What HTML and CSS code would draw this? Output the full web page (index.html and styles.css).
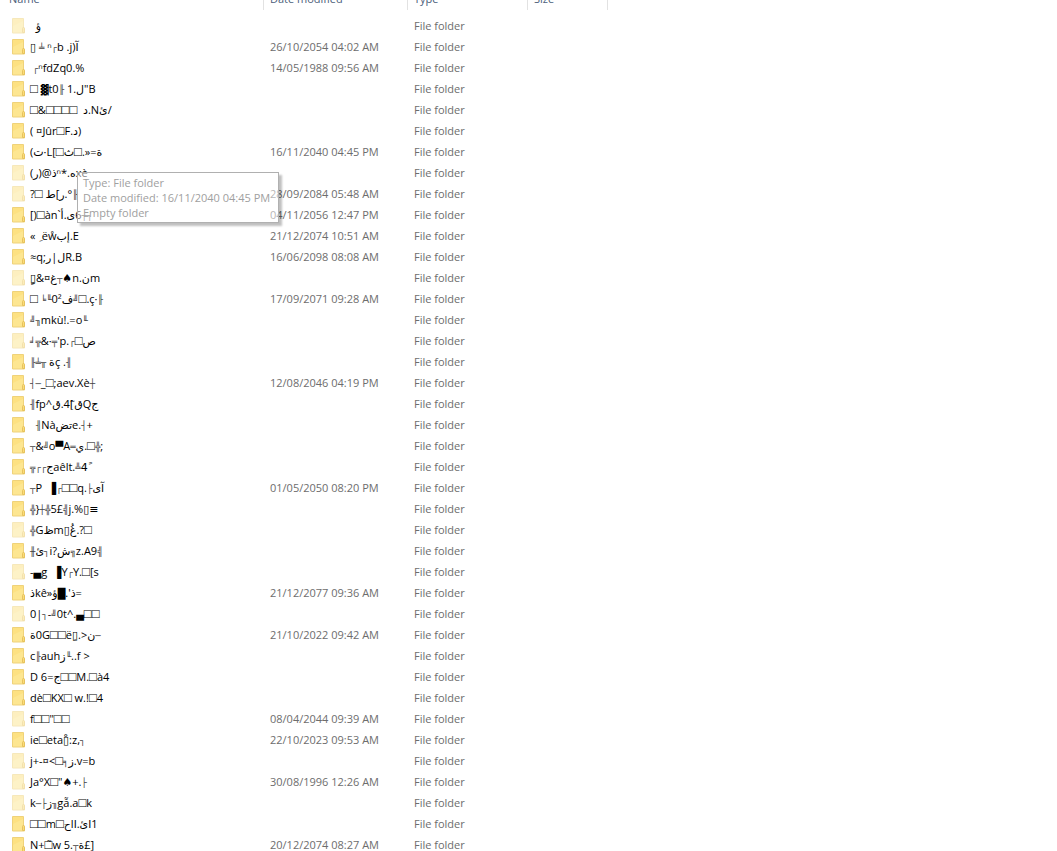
FILE: index.html
```html
<!DOCTYPE html>
<html lang="en">

<head>
  <meta charset="UTF-8">
  <meta name="viewport" content="width=device-width, initial-scale=1.0">
  <title>File folders</title>
  <link rel="stylesheet" href="styles.css">
</head>

<body>
  <main class="explorer">
    <table class="files">
      <thead>
        <tr>
          <th class="col-name">Name</th>
          <th class="col-date">Date modified</th>
          <th class="col-type">Type</th>
          <th class="col-size">Size</th>
          <th class="col-rest"></th>
        </tr>
      </thead>
      <tbody id="rows"></tbody>
    </table>
    <div class="tooltip" role="tooltip">
      <div>Type: File folder</div>
      <div>Date modified: 16/11/2040 04:45 PM</div>
      <div>Empty folder</div>
    </div>
  </main>

  <template id="row">
    <tr>
      <td>
        <span class="entry">
          <svg class="folder" width="14" height="17" viewBox="0 0 14 17" aria-hidden="true">
            <path d="M.5 1.500h11v9l1 1v4.500H.5z" fill="#fde691" stroke="#efd27a" />
            <path d="M1 9l10-5v-2H1z" fill="#fde182" />
            <path d="M10.500 15.500v-4l1-1.500 1 1.500v4z" fill="#fbdc78" stroke="#e6c25e" />
          </svg>
          <span class="name"></span>
        </span>
      </td>
      <td class="date"></td>
      <td>File folder</td>
      <td></td>
      <td></td>
    </tr>
  </template>

  <script>
    // name, date, hidden
    const folders = [
      ['\u00a0 ؤ', '', true],
      ['▯ ╧ ⁿ┌b .j)آ', '26/10/2054 04:02 AM'],
      ['\u00a0┌ⁿfdZq0.%', '14/05/1988 09:56 AM'],
      ['□ ▓t0╟ 1.ل"B', ''],
      ['□&□□□□ \u00a0د.Nئ/', ''],
      ['( ¤Jûr□F.د)', ''],
      ['(ت·L[□ث□.»=ة', '16/11/2040 04:45 PM'],
      ['(ر)@ذⁿ*.ەxè', '', true],
      ['?□ ط[ر.°╟', '28/09/2084 05:48 AM', true],
      ['[)□àn`أ.ى6┬┐', '04/11/2056 12:47 PM'],
      ['« \u00a0ِëẘبإ.E', '21/12/2074 10:51 AM'],
      ['≈q;ر|لR.B', '16/06/2098 08:08 AM'],
      ['▯ٍ&¤غ┬♠n.نm', '', true],
      ['□ ╘╙0²ف╝□.ç·╟', '17/09/2071 09:28 AM'],
      ['╝╖mkù!.=o╙', ''],
      ['╛╦&·╤\'p.┌□ص', '', true],
      ['╟╧╥ ةç .╢', ''],
      ['┤─_□;aev.Xè┼', '12/08/2046 04:19 PM'],
      ['╢fp^ق.4[ٓقQج', ''],
      ['\u00a0 ╢Nàضتe.┤+', ''],
      ['┬&╝o▀A═ي.□╬;', ''],
      ['╦┌┌جaêlt.╩4ً', ''],
      ['┬P \u00a0▐┌□□q.├ىآ', '01/05/2050 08:20 PM'],
      ['╬}┼╬5£╣j.%▯≡', ''],
      ['╬Gظm▯غُ.?□', '', true],
      ['╫ئ┐i?ش╗z.A9╣', ''],
      ['-▄g \u00a0▐Y┌Y.□[s', '', true],
      ['ذkê»ؤ█.\'ذ=', '21/12/2077 09:36 AM'],
      ['0|┐-╝0t^.▄□□', '', true],
      ['ة0G□□ë▯ِ.>ن─', '21/10/2022 09:42 AM'],
      ['c╟auhز╙..f >', ''],
      ['D 6=ج□□M.□à4', ''],
      ['dè□KX□ w.!□4', ''],
      ['f□□"□□', '08/04/2044 09:39 AM', true],
      ['ie□eta▯ْ:z,┐', '22/10/2023 09:53 AM'],
      ['j+-¤<□╕ز.v=b', '', true],
      ['Ja°X□"♠+.├', '30/08/1996 12:26 AM', true],
      ['k─├ز╖gẫ.a□k', '', true],
      ['□□m□حlا.ئا1', ''],
      ['N+□̃w 5.┬ة£]', '20/12/2074 08:27 AM']
    ]
    const rows = document.getElementById('rows')
    const template = document.getElementById('row')
    for (const [name, date, hidden] of folders) {
      const row = template.content.cloneNode(true)
      const label = row.querySelector('.name')
      // symbols get their own size, the rest stays plain text
      for (const part of name.split(/(□+|[\u2500-\u257f]+|[▀▄▓█]+)/)) {
        if (!part) continue
        const span = document.createElement('span')
        span.textContent = part
        if (part[0] === '□') span.className = 'missing'
        else if (/[\u2500-\u257f]/.test(part)) span.className = 'line'
        else if (/[▀▄▓█]/.test(part)) span.className = 'block'
        label.appendChild(span)
      }
      row.querySelector('.date').textContent = date
      if (hidden) row.querySelector('.folder').classList.add('hidden-item')
      rows.appendChild(row)
    }
  </script>
</body>

</html>
```

FILE: styles.css
```css
html,
body {
  height: 100%;
}

body {
  margin: 0;
  overflow: hidden;
  background: #fff;
  color: #6d6d6d;
  font: 11px/15px "Open Sans", "DejaVu Sans", sans-serif;
}

.explorer {
  display: flow-root;
  position: relative;
}

/* the list is scrolled up so the header is cut by the window edge */
.files {
  width: 100%;
  margin-top: -14px;
  table-layout: fixed;
  border-collapse: separate;
  border-spacing: 0;
}

th {
  height: 24px;
  padding: 0 6px;
  border-right: 1px solid #e2e2e2;
  box-sizing: border-box;
  color: #4c607a;
  font-weight: normal;
  text-align: left;
}

.col-name {
  width: 264px;
  padding-left: 9px;
}

.col-date {
  width: 144px;
}

.col-type {
  width: 120px;
}

.col-size {
  width: 80px;
}

.col-rest {
  border: none;
}

tbody::before {
  content: "";
  display: block;
  height: 5px;
}

td {
  height: 21px;
  padding: 0 6px;
  white-space: nowrap;
}

td:first-child {
  padding-left: 12px;
}

.entry {
  display: flex;
  align-items: center;
  gap: 4px;
  height: 21px;
}

.folder {
  flex: none;
}

.hidden-item {
  opacity: 0.5;
}

.name {
  height: 15px;
  color: #000;
  direction: ltr;
}

.name span {
  unicode-bidi: bidi-override;
}

.missing {
  font-family: "Liberation Sans", sans-serif;
  font-size: 13px;
  line-height: 1px;
}

.line {
  color: #444;
  font-size: 9px;
  line-height: 1px;
}

.block {
  font-size: 10px;
  line-height: 1px;
}

.tooltip {
  position: absolute;
  top: 172px;
  left: 77px;
  padding: 2px 8px 2px 5px;
  border: 1px solid #b0b0b0;
  background: rgba(255, 255, 255, 0.5);
  box-shadow: 3px 3px 2px rgba(0, 0, 0, 0.25);
  color: #a0a0a0;
  white-space: nowrap;
}
```
